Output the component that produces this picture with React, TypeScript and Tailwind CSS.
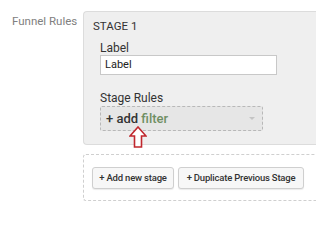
export default function App() {
  return (
    <div className="relative h-[208px] w-[316px] overflow-hidden bg-white font-['Roboto',sans-serif] text-[#333]">
      <div className="flex">
        {/* left label */}
        <div className="w-[83px] shrink-0 pl-[12px] pt-[14px] text-[11.5px] leading-[14px] text-[#808080]">
          Funnel Rules
        </div>

        <div className="flex-1">
          {/* stage panel */}
          <div className="mt-[11px] h-[134px] w-[240px] rounded-tl-[4px] rounded-bl-[4px] border border-r-0 border-[#dcdcdc] bg-[#efefef] pl-[9px] pt-[8px]">
            <div className="text-[11.5px] leading-[13px] text-[#333]">STAGE 1</div>
            <div className="pl-[7px] pt-[8px]">
              <div className="text-[12px] leading-[14px] text-[#333]">Label</div>
              <div className="h-[20px] w-[177px] border border-[#c8c8c8] bg-white pl-[4px] text-[11px] leading-[18px] text-[#222]">
                Label
              </div>
              <div className="pt-[16px] text-[12px] leading-[14px] text-[#333]">Stage Rules</div>
              <div className="mt-[1px] flex h-[25px] w-[163px] items-center justify-between rounded-[2px] border border-dashed border-[#b8b8b8] bg-[#e6e6e6] pl-[5px] pr-[7px]">
                <span className="text-[13px] font-medium leading-[15px] text-[#333]">
                  + add <span className="text-[#6f8f63]">filter</span>
                </span>
                <svg width="6" height="4" viewBox="0 0 6 4">
                  <path d="M0 0 L6 0 L3 3 Z" fill="#c4c4c4" />
                </svg>
              </div>
            </div>
          </div>

          {/* add stage box */}
          <div className="mt-[9px] h-[47px] w-[240px] rounded-l-[3px] border border-r-0 border-dashed border-[#cfcfcf] pl-[8px] pt-[12px]">
            <div className="flex gap-[4px]">
              <button className="h-[22px] w-[82px] rounded-[3px] border border-[#cfcfcf] bg-[#f7f7f7] text-[9.5px] font-medium tracking-[-0.2px] text-[#333] shadow-[0_1px_1px_rgba(0,0,0,0.08)]">
                + Add new stage
              </button>
              <button className="h-[22px] w-[126px] rounded-[3px] border border-[#cfcfcf] bg-[#f7f7f7] text-[9.5px] font-medium tracking-[-0.2px] text-[#333] shadow-[0_1px_1px_rgba(0,0,0,0.08)]">
                + Duplicate Previous Stage
              </button>
            </div>
          </div>
        </div>
      </div>

      {/* red annotation arrow */}
      <svg className="absolute left-[129px] top-[126px]" width="18" height="22" viewBox="0 0 18 22">
        <path d="M9 1 L17 10 L12.5 10 L12.5 21 L5.5 21 L5.5 10 L1 10 Z" fill="white" stroke="#c0272d" strokeWidth="1.6" strokeLinejoin="miter" />
      </svg>
    </div>
  )
}
